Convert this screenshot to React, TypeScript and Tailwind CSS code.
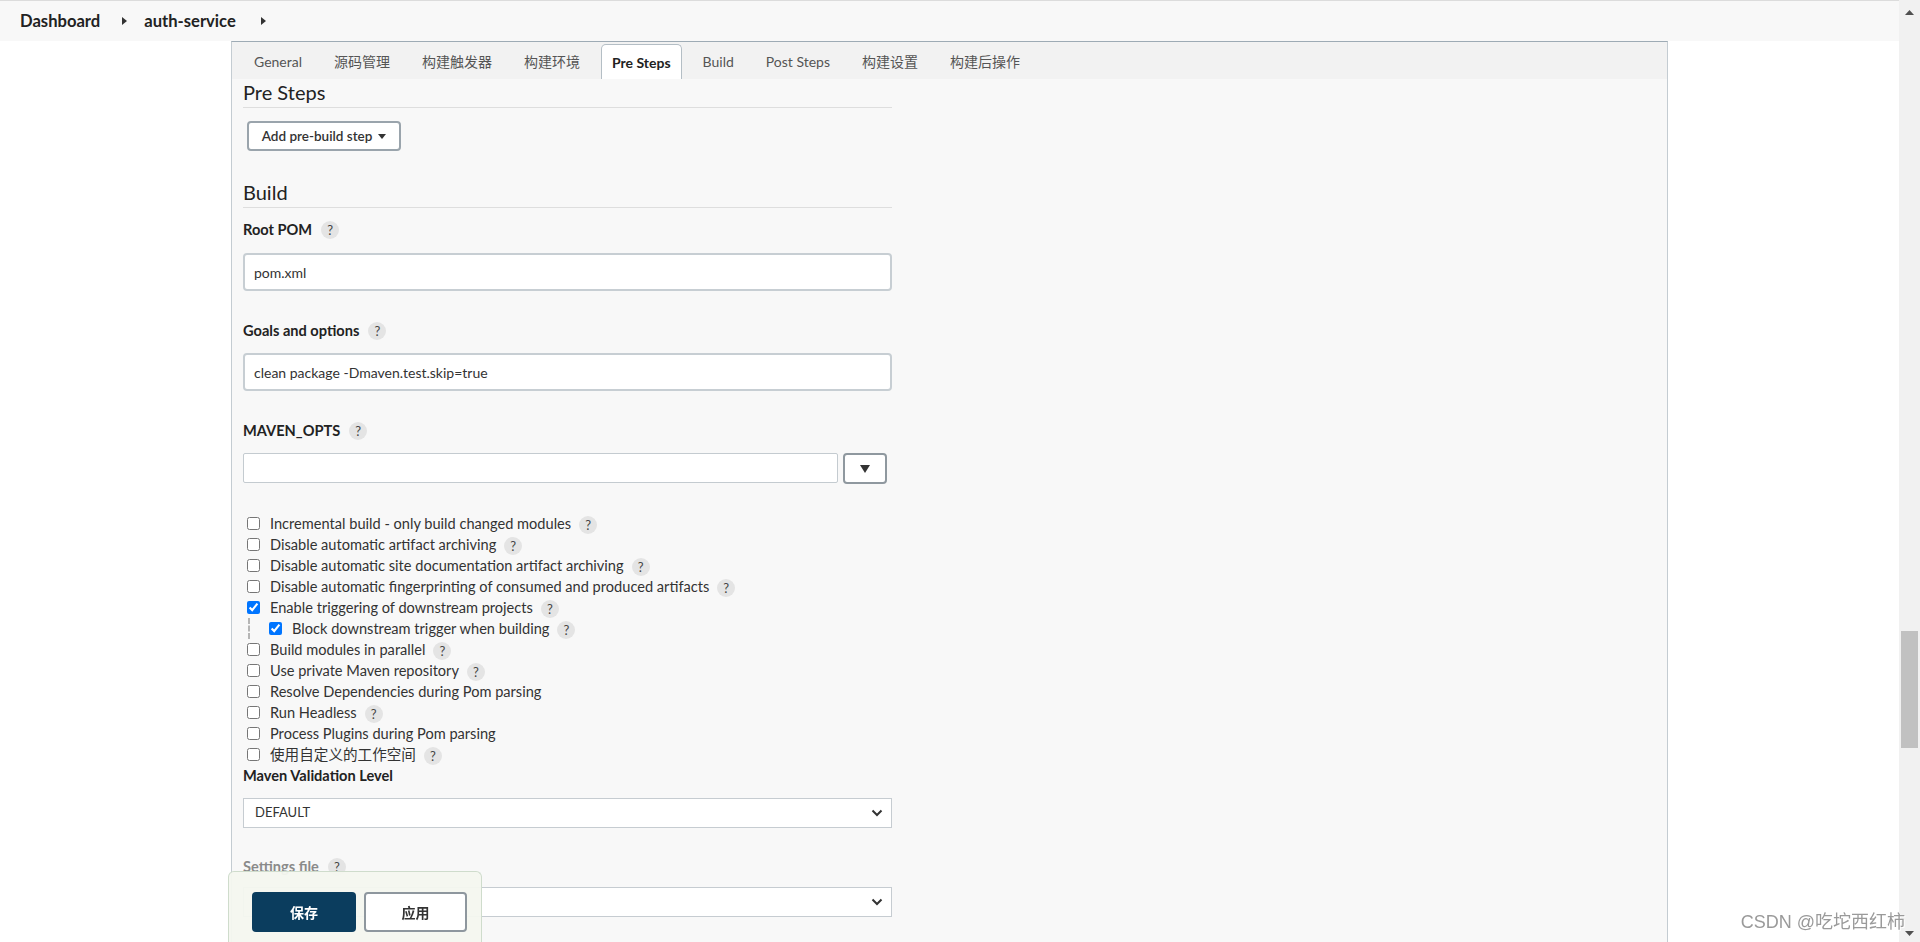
import React from 'react';

const Help = () => (
  <span className="inline-flex h-[18px] w-[18px] shrink-0 items-center justify-center rounded-full bg-[#e4e4e4] text-[13px] leading-none text-[#444]">
    ?
  </span>
);

const Caret = () => (
  <svg width="5" height="8" viewBox="0 0 5 8" className="fill-[#333]">
    <path d="M0 0 L5 4 L0 8 Z" />
  </svg>
);

const Chevron = () => (
  <svg width="12" height="8" viewBox="0 0 12 8" fill="none" stroke="#333" strokeWidth="2">
    <path d="M1.5 1.5 L6 6 L10.5 1.5" />
  </svg>
);

interface RowProps {
  label: string;
  help?: boolean;
  checked?: boolean;
}

const CheckRow: React.FC<RowProps> = ({ label, help = true, checked = false }) => (
  <label className="flex h-[21px] items-center">
    <input type="checkbox" defaultChecked={checked} className="m-0 h-[13px] w-[13px] shrink-0" />
    <span className="ml-[10px] whitespace-nowrap text-[14.6px] text-[#333]">{label}</span>
    {help && (
      <span className="ml-[8px]">
        <Help />
      </span>
    )}
  </label>
);

const tabs = ['General', '源码管理', '构建触发器', '构建环境', 'Pre Steps', 'Build', 'Post Steps', '构建设置', '构建后操作'];

const Label: React.FC<{ text: string; help?: boolean; className?: string }> = ({ text, help = true, className = '' }) => (
  <div className={`flex h-[20px] items-center gap-[9px] ${className}`}>
    <span className="text-[14.6px] font-bold text-[#222]">{text}</span>
    {help && <Help />}
  </div>
);

export default function App() {
  return (
    <div className="flex h-[942px] w-full overflow-hidden bg-white font-[Lato,'Noto_Sans_CJK_SC',sans-serif] text-[#333]">
      <div className="flex min-w-0 flex-1 flex-col">
        {/* Breadcrumb */}
        <div className="flex h-[41px] shrink-0 items-center border-t border-[#dcdcdc] bg-[#f8f8f8] pl-[20px]">
          <span className="text-[16.6px] font-bold text-[#222]">Dashboard</span>
          <span className="ml-[22px]">
            <Caret />
          </span>
          <span className="ml-[17px] text-[16.6px] font-bold text-[#222]">auth-service</span>
          <span className="ml-[25px]">
            <Caret />
          </span>
        </div>

        <div className="flex flex-1 pl-[231px]">
          <div className="flex w-[1437px] flex-col border-x border-t border-x-[#c4ccd2] border-t-[#9eabb5] bg-[#f8f8f8]">
            {/* Tabs */}
            <div className="flex h-[37px] shrink-0 items-end gap-[10px] bg-[#f2f2f2] pl-[11px]">
              {tabs.map((t) =>
                t === 'Pre Steps' ? (
                  <div
                    key={t}
                    className="flex h-[35px] items-center rounded-t-[5px] border border-b-0 border-[#b4bec5] bg-white px-[10px] text-[14px] font-bold text-[#222]"
                  >
                    {t}
                  </div>
                ) : (
                  <div key={t} className="flex h-[35px] items-center px-[11px] text-[14px] text-[#555]">
                    {t}
                  </div>
                )
              )}
            </div>

            {/* Form */}
            <div className="flex w-[660px] flex-col pl-[11px]">
              <div className="mt-[1px] border-b border-[#dedede] pb-[3px] text-[20px] leading-[24px] text-[#222]">Pre Steps</div>
              <button className="ml-[4px] mt-[13px] flex h-[30px] w-[154px] items-center justify-center gap-[6px] rounded-[4px] border-2 border-[#9aa4ac] bg-white text-[13.5px] font-semibold text-[#333]">
                Add pre-build step
                <svg width="8" height="5" viewBox="0 0 8 5" className="fill-[#333]">
                  <path d="M0 0 H8 L4 5 Z" />
                </svg>
              </button>

              <div className="mt-[29px] border-b border-[#dedede] pb-[3px] text-[20px] leading-[24px] text-[#222]">Build</div>

              <Label text="Root POM" className="mt-[12px]" />
              <div className="mt-[13px] flex h-[38px] items-center rounded-[4px] border-2 border-[#c7ced3] bg-white pl-[9px] text-[14px] text-[#333]">
                pom.xml
              </div>

              <Label text="Goals and options" className="mt-[30px]" />
              <div className="mt-[12px] flex h-[38px] items-center rounded-[4px] border-2 border-[#c7ced3] bg-white pl-[9px] text-[14px] text-[#333]">
                clean package -Dmaven.test.skip=true
              </div>

              <Label text="MAVEN_OPTS" className="mt-[30px]" />
              <div className="mt-[12px] flex h-[31px] items-start">
                <div className="h-[30px] w-[595px] rounded-[2px] border border-[#c4cbd0] bg-white" />
                <button className="ml-[5px] flex h-[31px] w-[44px] items-center justify-center rounded-[4px] border-2 border-[#8f989f] bg-white">
                  <svg width="10" height="8" viewBox="0 0 10 8" className="fill-[#333]">
                    <path d="M0 0 H10 L5 8 Z" />
                  </svg>
                </button>
              </div>

              <div className="mt-[29px] flex flex-col pl-[4px]">
                <CheckRow label="Incremental build - only build changed modules" />
                <CheckRow label="Disable automatic artifact archiving" />
                <CheckRow label="Disable automatic site documentation artifact archiving" />
                <CheckRow label="Disable automatic fingerprinting of consumed and produced artifacts" />
                <CheckRow label="Enable triggering of downstream projects" checked />
                <div className="ml-[1px] border-l-2 border-dashed border-[#b5b5b5] pl-[19px]">
                  <CheckRow label="Block downstream trigger when building" checked />
                </div>
                <CheckRow label="Build modules in parallel" />
                <CheckRow label="Use private Maven repository" />
                <CheckRow label="Resolve Dependencies during Pom parsing" help={false} />
                <CheckRow label="Run Headless" />
                <CheckRow label="Process Plugins during Pom parsing" help={false} />
                <CheckRow label="使用自定义的工作空间" />
              </div>

              <Label text="Maven Validation Level" help={false} className="mt-[1px]" />
              <div className="mt-[12px] flex h-[30px] w-[649px] items-center justify-between border border-[#c6ccd1] bg-white pl-[11px] pr-[8px] text-[13px] text-[#333]">
                DEFAULT
                <Chevron />
              </div>

              <div className="mt-[29px] flex h-[20px] items-center gap-[9px]">
                <span className="text-[14.6px] font-bold text-[#8a8a8a]">Settings file</span>
                <Help />
              </div>
              <div className="mt-[10px] flex h-[30px] w-[649px] items-center justify-end border border-[#c6ccd1] bg-white pr-[8px]">
                <Chevron />
              </div>
            </div>
          </div>
        </div>
      </div>

      {/* Scrollbar */}
      <div className="flex w-[21px] shrink-0 flex-col items-center bg-[#f1f1f1]">
        <div className="flex h-[24px] items-center justify-center">
          <svg width="9" height="5" viewBox="0 0 9 5" className="fill-[#505050]">
            <path d="M0 5 L4.5 0 L9 5 Z" />
          </svg>
        </div>
        <div className="mt-[607px] h-[117px] w-[17px] bg-[#c1c1c1]" />
        <div className="mt-auto flex h-[18px] items-center justify-center">
          <svg width="9" height="5" viewBox="0 0 9 5" className="fill-[#505050]">
            <path d="M0 0 L9 0 L4.5 5 Z" />
          </svg>
        </div>
      </div>

      {/* Sticky save bar */}
      <div className="fixed bottom-0 left-[228px] flex h-[71px] w-[254px] items-start gap-[8px] rounded-t-[6px] border border-b-0 border-[#cfdccc] bg-[#f4f7ef]/95 pl-[23px] pt-[20px]">
        <button className="flex h-[40px] w-[104px] items-center justify-center rounded-[4px] bg-[#0b3d5e] text-[14px] font-bold text-white">
          保存
        </button>
        <button className="flex h-[40px] w-[103px] items-center justify-center rounded-[4px] border-2 border-[#8e979e] bg-white text-[14px] font-bold text-[#333]">
          应用
        </button>
      </div>

      {/* Watermark */}
      <div className="pointer-events-none fixed bottom-[9px] right-[15px] font-['Liberation_Sans','Noto_Sans_CJK_SC',sans-serif] text-[18px] leading-[22px] text-[#9a9a9a] [text-shadow:1px_1px_0_#fff]">
        CSDN @吃坨西红柿
      </div>
    </div>
  );
}
